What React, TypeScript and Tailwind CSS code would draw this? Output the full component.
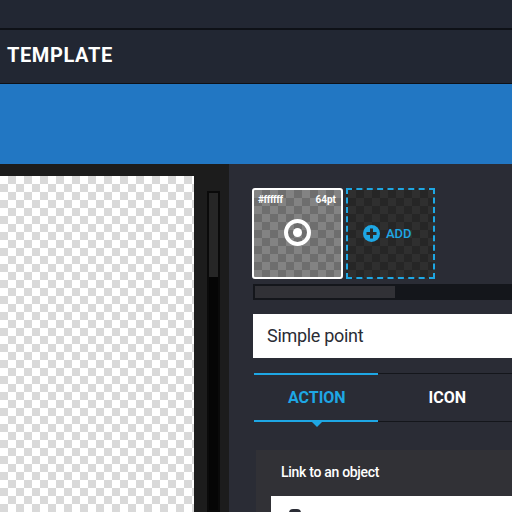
const lightChecker =
  "bg-[conic-gradient(#d9d9d9_25%,#ffffff_0_50%,#d9d9d9_0_75%,#ffffff_0)] bg-[length:16px_16px]"

function AddIcon() {
  return (
    <svg width="17" height="17" viewBox="0 0 17 17">
      <circle cx="8.5" cy="8.5" r="8.5" fill="#1ea7e4" />
      <rect x="7" y="3.5" width="3" height="10" fill="#2b2b2b" />
      <rect x="3.5" y="7" width="10" height="3" fill="#2b2b2b" />
    </svg>
  )
}

function Swatches() {
  return (
    <div className="flex gap-[3px]">
      <div className="h-[91px] w-[91px] rounded-[3px] border-2 border-white bg-[conic-gradient(#6e6e6e_25%,#838383_0_50%,#6e6e6e_0_75%,#838383_0)] bg-[length:16px_16px]">
        <div className="flex justify-between pl-[4px] pr-[5px] pt-[3px] text-[10px] font-bold leading-[14px] text-white">
          <span className="tracking-[-0.4px]">#ffffff</span>
          <span>64pt</span>
        </div>
        <div className="mt-[12px] flex justify-center">
          <div className="flex h-[27px] w-[27px] items-center justify-center rounded-full border-[4px] border-white">
            <div className="h-[9px] w-[9px] rounded-full bg-white" />
          </div>
        </div>
      </div>
      <div className="flex h-[91px] w-[89px] items-center gap-[6px] border-2 border-dashed border-[#1ea7e4] bg-[conic-gradient(#262626_25%,#2f2f2f_0_50%,#262626_0_75%,#2f2f2f_0)] bg-[length:16px_16px] pl-[15px]">
        <AddIcon />
        <span className="text-[13px] font-medium text-[#1ea7e4]">ADD</span>
      </div>
    </div>
  )
}

export default function App() {
  return (
    <div className="flex h-[512px] w-[512px] flex-col overflow-hidden bg-[#2a2c35] font-['Roboto',sans-serif]">
      <div className="h-[28px] shrink-0 bg-[#222733]" />
      <div className="h-[2px] shrink-0 bg-[#0e1117]" />
      <div className="flex h-[53px] shrink-0 items-center bg-[#222733] pb-[4px] pl-[7px]">
        <h1 className="text-[20px] font-bold tracking-[0.6px] text-white">TEMPLATE</h1>
      </div>
      <div className="h-[1px] shrink-0 bg-[#0e1117]" />
      <div className="h-[80px] shrink-0 bg-[#2277c3]" />

      <div className="flex min-h-0 flex-1">
        {/* canvas */}
        <div className="flex w-[229px] shrink-0 bg-[#1c1c1c] pt-[12px]">
          <div className={`w-[194px] ${lightChecker}`} />
          <div className="ml-[13px] mt-[15px] w-[13px] border-2 border-[#0a0a0a] bg-[#050505]">
            <div className="h-[84px] bg-[#262626]" />
          </div>
        </div>

        {/* panel */}
        <div className="min-w-0 flex-1 pl-[23px] pt-[24px]">
          <Swatches />

          <div className="ml-[1px] mt-[5px] h-[16px] border-2 border-[#14161b] bg-[#14161b]">
            <div className="h-full w-[140px] bg-[#313136]" />
          </div>

          <div className="ml-[1px] mt-[14px] flex h-[44px] items-center bg-white pb-[1px] pl-[14px] text-[18px] tracking-[-0.3px] text-[#2a2c35]">
            Simple point
          </div>

          <div className="relative ml-[2px] mt-[15px] flex h-[49px] border-y border-[#14161b]">
            <div className="-my-px flex w-[125px] items-center justify-center border-y-2 border-[#1ea7e4] pl-[2px] text-[16px] font-bold text-[#1ea7e4]">
              ACTION
            </div>
            <div className="flex w-[136px] items-center justify-center pl-[5px] text-[16px] font-bold text-white">
              ICON
            </div>
            <div className="absolute left-[57px] top-[47px] h-0 w-0 border-x-[6px] border-t-[6px] border-x-transparent border-t-[#1ea7e4]" />
          </div>

          <div className="ml-[4px] mt-[28px] bg-[#313136] pl-[15px] pt-[13px]">
            <p className="pl-[10px] text-[14px] font-medium leading-[18px] tracking-[-0.3px] text-white">Link to an object</p>
            <div className="mt-[15px] h-[20px] bg-white pl-[18px] pt-[13px]">
              <div className="h-[8px] w-[12px] rounded-full bg-[#2a2c35]" />
            </div>
          </div>
        </div>
      </div>
    </div>
  )
}
